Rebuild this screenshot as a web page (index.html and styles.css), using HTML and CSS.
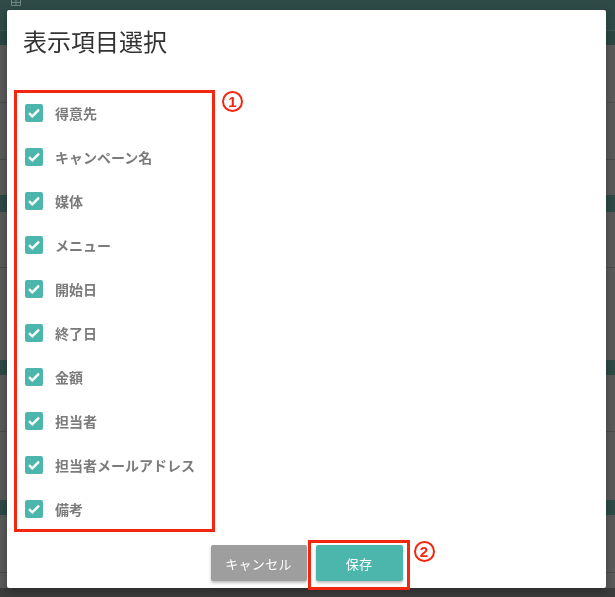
FILE: index.html
```html
<!DOCTYPE html>
<html lang="ja">
<head>
<meta charset="utf-8">
<title>表示項目選択</title>
<link rel="stylesheet" href="styles.css">
</head>
<body>
<div class="page">
  <div class="hdr">
    <svg class="hdr-icon" width="10" height="6" viewBox="0 0 10 6"><path d="M0.5 0V5.5H9.5V0M5 0V5.5M0.5 2.5H9.5" fill="none" stroke="#6f8a86" stroke-width="1"/></svg>
  </div>
  <div class="subbar"></div>
  <div class="band h58 line"></div>
  <div class="band h57 line"></div>
  <div class="band h35"></div>
  <div class="teal h17"></div>
  <div class="band h56 line"></div>
  <div class="band h92"></div>
  <div class="teal h15"></div>
  <div class="band h57 line"></div>
  <div class="band h68"></div>
  <div class="teal h15"></div>
  <div class="band h58 line"></div>
  <div class="band h15"></div>
  <div class="footer-dark"></div>
</div>

<div class="modal">
  <h1 class="modal-title">表示項目選択</h1>
  <div class="field-list">
    <span class="mark mark-1">1</span>
    <label class="field"><span class="cb"><svg width="18" height="18" viewBox="0 0 18 18"><path d="M4 9.2L7.3 12.4L14 5.7" fill="none" stroke="#fff" stroke-width="2.4"/></svg></span><span class="field-name">得意先</span></label>
    <label class="field"><span class="cb"><svg width="18" height="18" viewBox="0 0 18 18"><path d="M4 9.2L7.3 12.4L14 5.7" fill="none" stroke="#fff" stroke-width="2.4"/></svg></span><span class="field-name">キャンペーン名</span></label>
    <label class="field"><span class="cb"><svg width="18" height="18" viewBox="0 0 18 18"><path d="M4 9.2L7.3 12.4L14 5.7" fill="none" stroke="#fff" stroke-width="2.4"/></svg></span><span class="field-name">媒体</span></label>
    <label class="field"><span class="cb"><svg width="18" height="18" viewBox="0 0 18 18"><path d="M4 9.2L7.3 12.4L14 5.7" fill="none" stroke="#fff" stroke-width="2.4"/></svg></span><span class="field-name">メニュー</span></label>
    <label class="field"><span class="cb"><svg width="18" height="18" viewBox="0 0 18 18"><path d="M4 9.2L7.3 12.4L14 5.7" fill="none" stroke="#fff" stroke-width="2.4"/></svg></span><span class="field-name">開始日</span></label>
    <label class="field"><span class="cb"><svg width="18" height="18" viewBox="0 0 18 18"><path d="M4 9.2L7.3 12.4L14 5.7" fill="none" stroke="#fff" stroke-width="2.4"/></svg></span><span class="field-name">終了日</span></label>
    <label class="field"><span class="cb"><svg width="18" height="18" viewBox="0 0 18 18"><path d="M4 9.2L7.3 12.4L14 5.7" fill="none" stroke="#fff" stroke-width="2.4"/></svg></span><span class="field-name">金額</span></label>
    <label class="field"><span class="cb"><svg width="18" height="18" viewBox="0 0 18 18"><path d="M4 9.2L7.3 12.4L14 5.7" fill="none" stroke="#fff" stroke-width="2.4"/></svg></span><span class="field-name">担当者</span></label>
    <label class="field"><span class="cb"><svg width="18" height="18" viewBox="0 0 18 18"><path d="M4 9.2L7.3 12.4L14 5.7" fill="none" stroke="#fff" stroke-width="2.4"/></svg></span><span class="field-name">担当者メールアドレス</span></label>
    <label class="field"><span class="cb"><svg width="18" height="18" viewBox="0 0 18 18"><path d="M4 9.2L7.3 12.4L14 5.7" fill="none" stroke="#fff" stroke-width="2.4"/></svg></span><span class="field-name">備考</span></label>
  </div>
  <div class="modal-actions">
    <button class="btn btn-cancel">キャンセル</button>
    <div class="save-wrap">
      <button class="btn btn-save">保存</button>
      <span class="save-outline"></span>
      <span class="mark mark-2">2</span>
    </div>
  </div>
</div>
</body>
</html>
```

FILE: styles.css
```css
* { box-sizing: border-box; }
html, body { margin: 0; padding: 0; }
body {
  width: 615px;
  height: 597px;
  overflow: hidden;
  background: #5a5a5a;
  font-family: "Noto Sans CJK JP", "Noto Sans", sans-serif;
}

/* background page (dimmed) */
.page { display: flex; flex-direction: column; }
.hdr { height: 30px; background: #2f4b47; padding-left: 11px; }
.hdr-icon { display: block; }
.subbar { height: 15px; background: #2b4743; border-top: 1px solid #3b5753; }
.band { background: #5a5a5a; }
.band.line { border-bottom: 1px solid #4b4b4b; }
.teal { background: #2e4a46; }
.h15 { height: 15px; }
.h17 { height: 17px; }
.h35 { height: 35px; }
.h56 { height: 56px; }
.h57 { height: 57px; }
.h58 { height: 58px; }
.h68 { height: 68px; }
.h92 { height: 92px; }
.footer-dark { height: 9px; background: #3c3c3c; }

/* modal */
.modal {
  position: fixed;
  left: 7px;
  top: 10px;
  width: 599px;
  height: 578px;
  background: #fff;
  border-radius: 2px;
  box-shadow: 0 3px 10px rgba(0,0,0,.3);
  display: flex;
  flex-direction: column;
}
.modal-title {
  margin: 0;
  padding: 14px 16px 0;
  font-size: 24px;
  line-height: 33px;
  font-weight: 400;
  color: #333;
}
.field-list {
  position: relative;
  margin: 33px 0 0 7px;
  width: 201px;
  border: 3px solid #f3260f;
  padding: 11px 0 11px 8px;
  display: flex;
  flex-direction: column;
  gap: 26px;
}
.field {
  display: flex;
  align-items: center;
  height: 18px;
}
.cb {
  width: 18px;
  height: 18px;
  border-radius: 2px;
  background: #4db6ac;
  display: block;
  flex: none;
}
.cb svg { display: block; }
.field-name {
  margin-left: 12px;
  font-size: 14px;
  font-weight: 700;
  color: #7b7b7b;
  white-space: nowrap;
}

.mark {
  position: absolute;
  width: 21px;
  height: 21px;
  border: 2px solid #f3260f;
  border-radius: 50%;
  background: #fff;
  color: #f3260f;
  font-family: "Liberation Sans", Arial, sans-serif;
  font-weight: 700;
  font-size: 15px;
  line-height: 17px;
  text-align: center;
}
.mark-1 { left: 205px; top: -2px; }

.modal-actions {
  margin-top: 13px;
  display: flex;
  justify-content: center;
  gap: 9px;
}
.btn {
  height: 36px;
  border: none;
  border-radius: 2px;
  color: #fff;
  font-family: "Noto Sans CJK JP", sans-serif;
  font-size: 13px;
  font-weight: 400;
  letter-spacing: 0.3px;
  box-shadow: 0 2px 3px rgba(0,0,0,.25);
  padding: 0;
}
.btn-cancel { width: 96px; background: #9e9e9e; }
.btn-save { width: 87px; background: #4db6ac; display: block; }
.save-wrap { position: relative; }
.save-outline {
  position: absolute;
  left: -8px;
  right: -7px;
  top: -5px;
  bottom: -9px;
  border: 3px solid #f3260f;
}
.mark-2 { left: 98px; top: -4px; }
```
